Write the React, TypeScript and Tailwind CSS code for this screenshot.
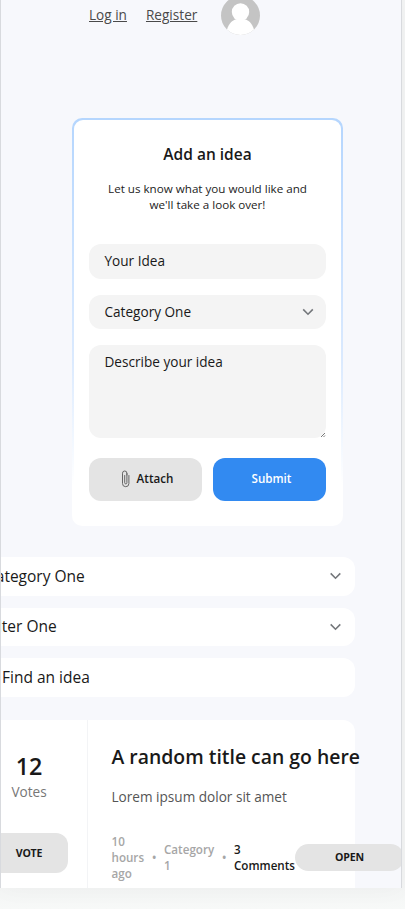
import type { ReactNode } from "react";

function Chevron({ className }: { className: string }) {
  return (
    <svg viewBox="0 0 12 8" className={className} fill="none" stroke="#74777b" strokeWidth="1.600">
      <path d="M1.200 1.400 L6 6.200 L10.800 1.400" />
    </svg>
  );
}

function Avatar() {
  return (
    <svg viewBox="0 0 39 39" className="ml-6 h-[39px] w-[39px] shrink-0 rounded-full">
      <rect width="39" height="39" fill="#c4c4c4" />
      <circle cx="19.5" cy="16" r="8.7" fill="#fff" />
      <path d="M6 33.500 C8 27 12 23.800 15.500 23.300 H23.500 C27 23.800 31 27 33 33.500 L30 39 H9 Z" fill="#fff" />
    </svg>
  );
}

function Paperclip() {
  return (
    <svg viewBox="0 0 9 18" className="mr-[7px] h-[18px] w-[9px]" fill="none" stroke="#666" strokeWidth="1" strokeLinecap="round">
      <path d="M1.500 4.500 V13.500 A3.200 3.200 0 0 0 7.900 13.500 V5.500 M5.900 5 V3.200 A2.200 2.200 0 0 0 1.500 3.200 V5 M5.900 3.500 V12.800 A1.100 1.100 0 0 1 3.700 12.800 V5.500" />
    </svg>
  );
}

function Filter({ children, arrow = true }: { children: ReactNode; arrow?: boolean }) {
  return (
    <div className="flex h-[38.500px] items-center justify-between rounded-xl bg-white pr-[13px] pl-4 text-[15.500px]">
      <span>{children}</span>
      {arrow && <Chevron className="h-2 w-[13px]" />}
    </div>
  );
}

function IdeaForm() {
  return (
    <section className="mt-[83.500px] ml-[71px] h-[408px] w-[271px] rounded-[10px] bg-linear-to-b from-[#b5d6fe] via-[#dbeafe] via-60% to-white to-90% p-[2px]">
      <div className="h-full rounded-[9px] bg-white px-[15px] pt-[22px]">
        <h3 className="text-center text-[15.500px] leading-6 font-semibold">Add an idea</h3>
        <p className="mt-[15px] text-center text-[11.640px] leading-4 text-[#222]">
          Let us know what you would like and
          <br />
          we'll take a look over!
        </p>
        <div className="mt-[31px] flex h-[35px] items-center rounded-xl bg-[#f4f4f4] px-[15.500px] pb-px text-[13.600px]">Your Idea</div>
        <div className="mt-4 flex h-[34px] items-center justify-between rounded-xl bg-[#f4f4f4] pr-3 pl-[15.500px] text-[13.600px]">
          <span>Category One</span>
          <Chevron className="h-2 w-3" />
        </div>
        <div className="mt-4 flex h-[93px] items-end justify-between rounded-xl bg-[#f4f4f4] pl-[15.500px] text-[13.600px]">
          <span className="self-start pt-[7px]">Describe your idea</span>
          <svg viewBox="0 0 6 6" className="h-[6px] w-[6px]" stroke="#555" strokeWidth="0.8">
            <path d="M1 5 L5 1 M3.500 5 L5 3.500" />
          </svg>
        </div>
        <div className="mt-5 grid h-[43px] grid-cols-2 gap-[11px] text-[11.640px] font-semibold">
          <button className="flex items-center justify-center rounded-xl bg-[#e4e4e4] pb-px pl-[3px]">
            <Paperclip />
            Attach
          </button>
          <button className="rounded-xl bg-[#328af1] pb-px pl-1 text-white">Submit</button>
        </div>
      </div>
    </section>
  );
}

function IdeaCard() {
  return (
    <article className="mt-[23.500px] -ml-[31px] flex h-[200px] w-[385px] rounded-xl bg-white">
      <div className="flex w-[118px] shrink-0 flex-col items-center border-r border-[#f3f4f6] pt-[30px] pl-px">
        <div className="text-[23.300px] leading-8 font-semibold">12</div>
        <div className="mt-px text-[13.600px] leading-[18px] text-[#777]">Votes</div>
        <button className="mt-8 h-10 w-[78px] rounded-xl bg-[#e4e4e4] pt-px text-[10.600px] font-bold tracking-[-0.2px]">VOTE</button>
      </div>
      <div className="ml-[23.500px] shrink-0 pt-[23px] whitespace-nowrap">
        <h4 className="text-[19.400px] leading-7 font-semibold">A random title can go here</h4>
        <p className="mt-4 text-[13.600px] leading-5 text-[#555]">Lorem ipsum dolor sit amet</p>
        <div className="mt-[27px] flex h-[47px] items-center text-[11.640px] leading-4 font-semibold text-[#a6a6a6]">
          <div className="w-[40.500px]">10<br />hours<br />ago</div>
          <span className="w-3">•</span>
          <div className="w-[58px]">Category<br />1</div>
          <span className="w-3">•</span>
          <div className="w-[61px] text-[#191919]">3<br />Comments</div>
          <button className="h-[27px] w-[109px] shrink-0 rounded-full bg-[#e4e4e4] pb-[2px] text-[10.600px] font-bold tracking-[-0.2px] text-[#191919]">OPEN</button>
        </div>
      </div>
    </article>
  );
}

export default function App() {
  return (
    <div className="h-[909px] w-full overflow-hidden bg-linear-to-b from-[#f3f4f4] from-97% to-[#f7f9f8] font-['Open_Sans','Noto_Sans',sans-serif] text-[#191919]">
      <main className="h-[888px] w-[402px] overflow-hidden border-x border-[#d8dade] bg-[#f7f8fc] shadow-[0_0_24px_rgba(0,0,0,0.035)]">
        <header className="-mt-[4.500px] flex h-[39px] items-center pl-[88px] text-[13.600px] text-[#4a4a4a]">
          <a href="#" className="pt-px underline">Log in</a>
          <a href="#" className="ml-[19px] pt-px underline">Register</a>
          <Avatar />
        </header>
        <IdeaForm />
        <div className="mt-[31px] -ml-[31px] flex w-[385px] flex-col gap-3">
          <Filter>Category One</Filter>
          <Filter>Filter One</Filter>
          <Filter arrow={false}><span className="pl-4">Find an idea</span></Filter>
        </div>
        <IdeaCard />
      </main>
    </div>
  );
}
